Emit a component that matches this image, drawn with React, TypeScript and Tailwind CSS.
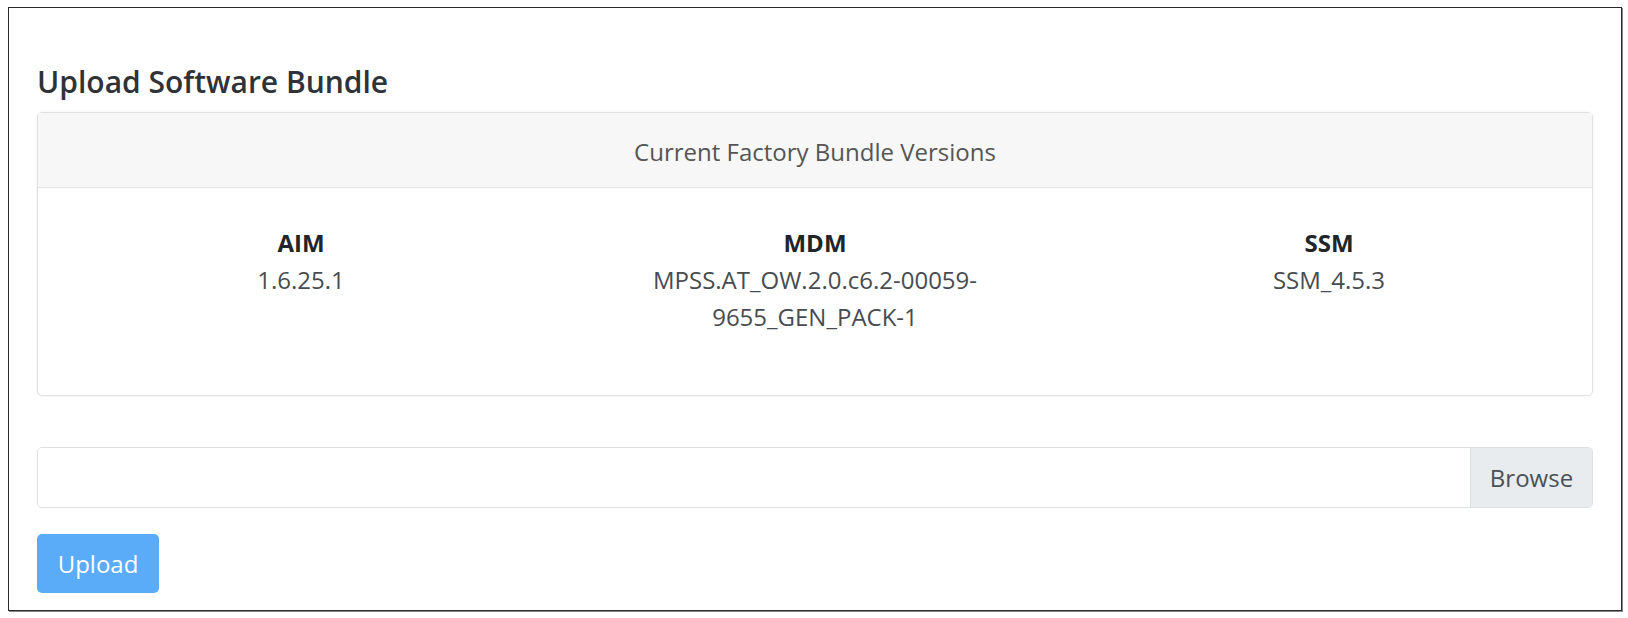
export default function App() {
  const versions = [
    { name: 'AIM', lines: ['1.6.25.1'] },
    { name: 'MDM', lines: ['MPSS.AT_OW.2.0.c6.2-00059-', '9655_GEN_PACK-1'] },
    { name: 'SSM', lines: ['SSM_4.5.3'] },
  ];

  return (
    <div className="h-[618px] w-[1628px] bg-white pl-[8px] pt-[7px] font-['Open_Sans',sans-serif]">
      <div className="flex h-[604px] w-[1614px] flex-col border border-[#2a2a2a] px-[28px] pt-[56px] shadow-[1px_1px_0_#888]">
        <h4 className="mb-[12px] text-[30px] font-semibold leading-[36px] text-[#2f3337]">
          Upload Software Bundle
        </h4>

        <div className="rounded-[5px] border border-[#e0e0e0] shadow-[0_0_3px_rgba(0,0,0,0.06)]">
          <div className="flex h-[75px] items-center justify-center border-b border-[#e3e3e3] bg-[#f7f7f7] pt-[3px] text-[24px] leading-[36px] text-[#555]">
            Current Factory Bundle Versions
          </div>
          <div className="grid grid-cols-3 px-[6px] pb-[60px] pt-[36px] text-center">
            {versions.map((v) => (
              <div key={v.name}>
                <div className="text-[24px] font-bold leading-[37px] text-[#212529]">{v.name}</div>
                {v.lines.map((l) => (
                  <div key={l} className="text-[24px] leading-[37px] text-[#474c51]">
                    {l}
                  </div>
                ))}
              </div>
            ))}
          </div>
        </div>

        <div className="mt-[51px] flex h-[61px] overflow-hidden rounded-[5px] border border-[#dcdfe3]">
          <div className="flex-1 bg-white" />
          <div className="flex w-[122px] items-center justify-center border-l border-[#dcdfe3] bg-[#e9ecef] text-[24px] text-[#495057]">
            Browse
          </div>
        </div>

        <div className="mt-[26px]">
          <button className="flex h-[59px] w-[122px] items-center justify-center rounded-[5px] bg-[#5aabf8] text-[24px] text-white">
            Upload
          </button>
        </div>
      </div>
    </div>
  );
}
